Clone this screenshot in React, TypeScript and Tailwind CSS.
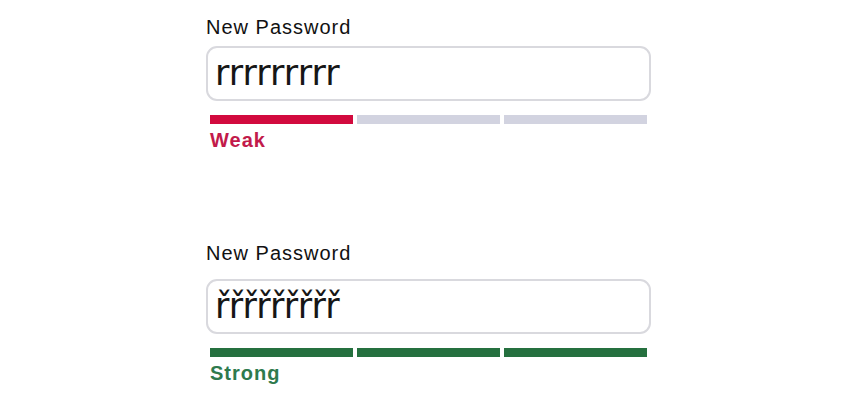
const Meter = ({ level }: { level: "weak" | "strong" }) => {
  const segs = level === "weak" ? ["bg-[#d20a3e]", "bg-[#d2d3e0]", "bg-[#d2d3e0]"] : ["bg-[#25703f]", "bg-[#25703f]", "bg-[#25703f]"];
  return (
    <div className="ml-[4px] grid w-[437px] grid-cols-3 gap-[4px]">
      {segs.map((c, i) => (
        <div key={i} className={`h-[9px] ${c}`} />
      ))}
    </div>
  );
};

const PasswordField = ({ value, level, inputGap }: { value: string; level: "weak" | "strong"; inputGap: string }) => (
  <div className="flex flex-col">
    <label className="text-[20px] leading-[24px] tracking-[1px] text-[#111] font-['Liberation_Sans',Arial,sans-serif]">New Password</label>
    <div className={`${inputGap} flex h-[55px] w-[445px] items-center rounded-[11px] border-2 border-[#d9d9de] bg-white px-[7px]`}>
      <span className="text-[35px] leading-none text-[#161616] font-['DejaVu_Sans',Verdana,sans-serif]">{value}</span>
    </div>
    <div className="mt-[14px]">
      <Meter level={level} />
    </div>
    <span
      className={`ml-[4px] mt-[4px] text-[20px] font-bold leading-[24px] tracking-[1px] font-['Liberation_Sans',Arial,sans-serif] ${
        level === "weak" ? "text-[#c21a4b]" : "text-[#2e7a4d]"
      }`}
    >
      {level === "weak" ? "Weak" : "Strong"}
    </span>
  </div>
);

export default function App() {
  return (
    <div className="h-[401px] w-[850px] overflow-hidden bg-white pl-[206px] pt-[15px]">
      <PasswordField value="rrrrrrrrr" level="weak" inputGap="mt-[7px]" />
      <div className="mt-[89px]">
        <PasswordField value="řřřřřřřřř" level="strong" inputGap="mt-[14px]" />
      </div>
    </div>
  );
}
